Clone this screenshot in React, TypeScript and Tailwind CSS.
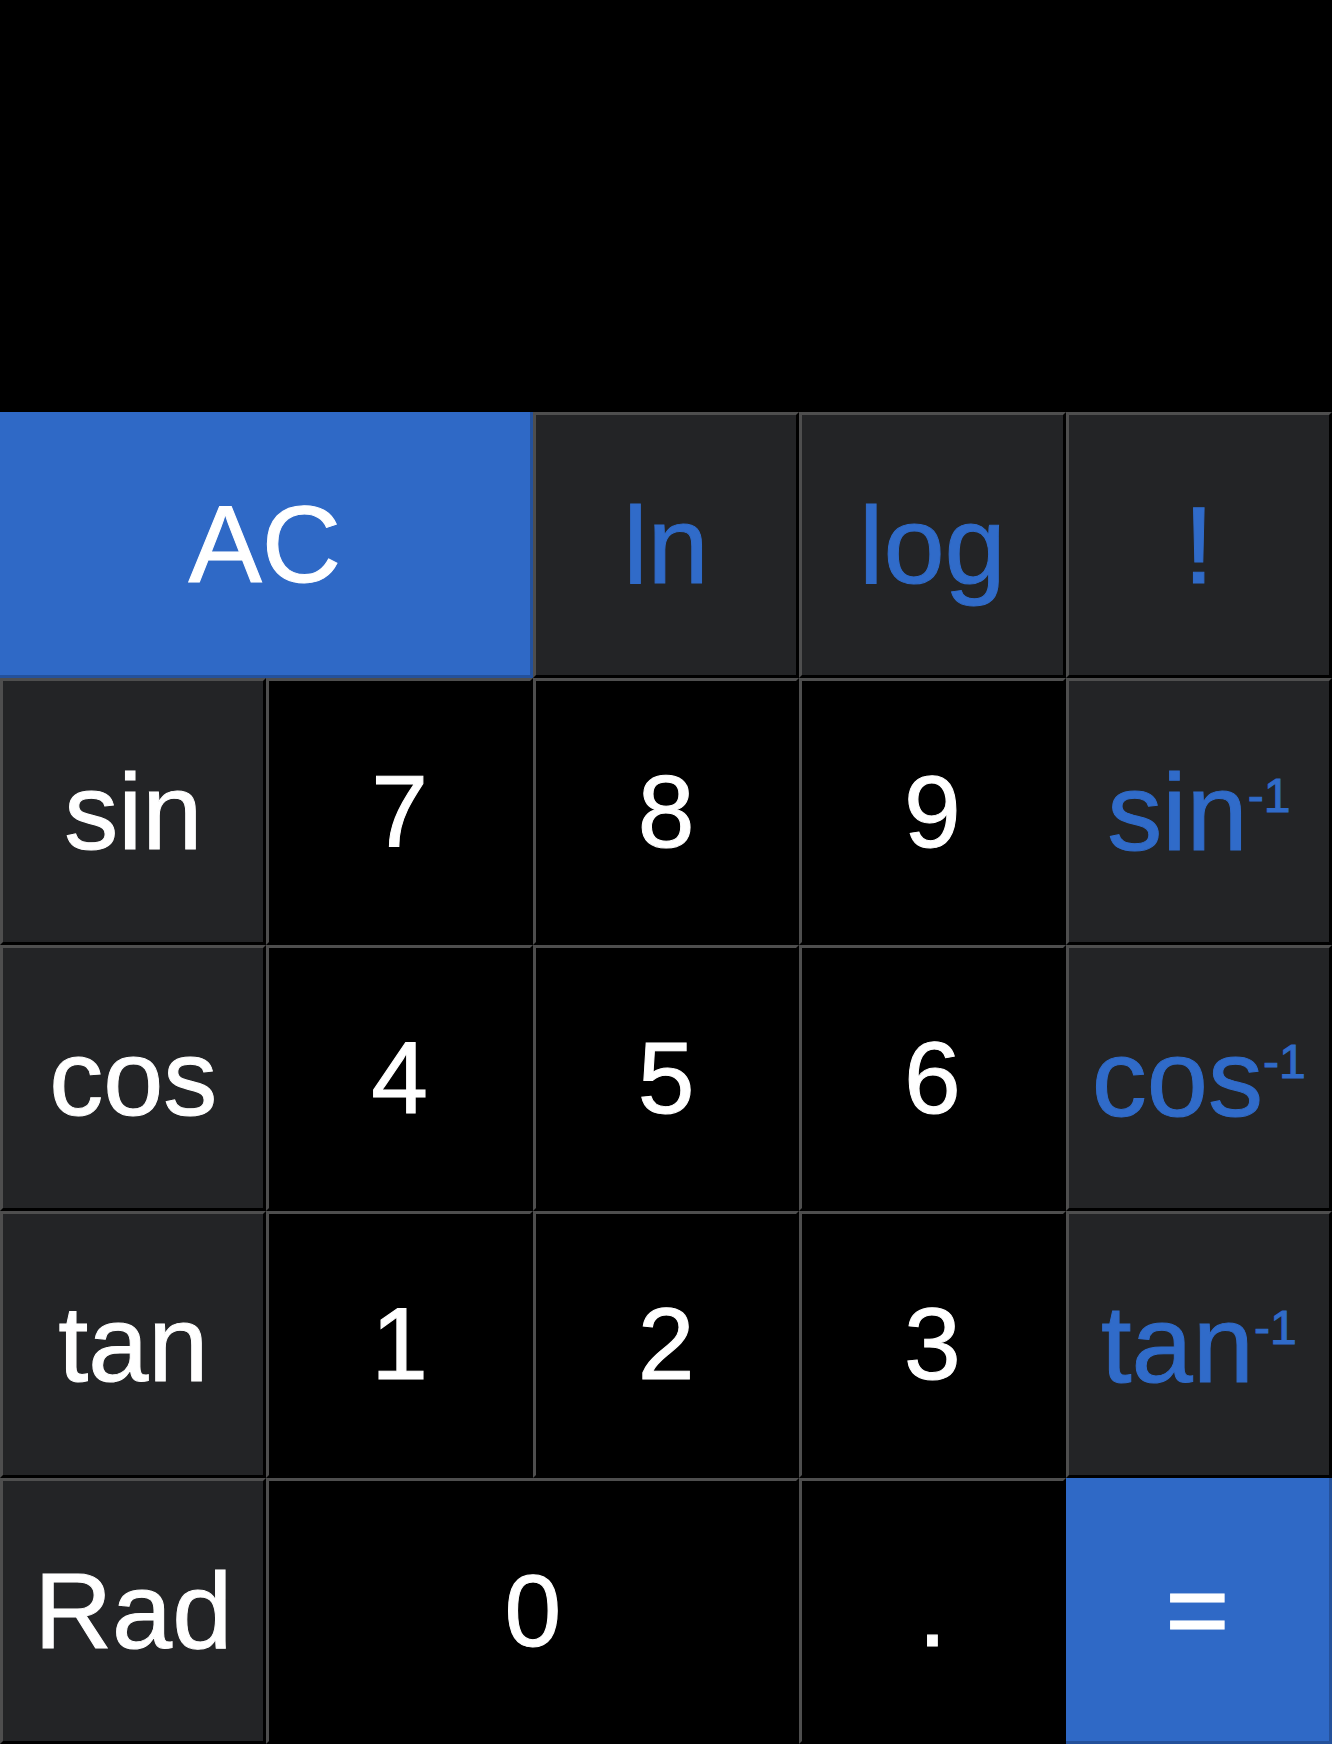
type Key = {
  label: string;
  sup?: string;
  tone: "blue" | "fn" | "num" | "side";
  span?: boolean;
};

const keys: Key[] = [
  { label: "AC", tone: "blue", span: true },
  { label: "ln", tone: "fn" },
  { label: "log", tone: "fn" },
  { label: "!", tone: "fn" },
  { label: "sin", tone: "side" },
  { label: "7", tone: "num" },
  { label: "8", tone: "num" },
  { label: "9", tone: "num" },
  { label: "sin", sup: "-1", tone: "fn" },
  { label: "cos", tone: "side" },
  { label: "4", tone: "num" },
  { label: "5", tone: "num" },
  { label: "6", tone: "num" },
  { label: "cos", sup: "-1", tone: "fn" },
  { label: "tan", tone: "side" },
  { label: "1", tone: "num" },
  { label: "2", tone: "num" },
  { label: "3", tone: "num" },
  { label: "tan", sup: "-1", tone: "fn" },
  { label: "Rad", tone: "side" },
  { label: "0", tone: "num", span: true },
  { label: ".", tone: "num" },
  { label: "=", tone: "blue" },
];

const toneClass = {
  blue: "bg-[#2f69c6] text-white text-[110px] border-r-[3px] border-b-[3px] border-r-[#24519b] border-b-[#24519b]",
  fn: "bg-[#232426] text-[#306bc9] text-[110px] border-[3px] border-t-[#4e4e4e] border-l-[#4e4e4e] border-r-black border-b-black",
  side: "bg-[#232426] text-white text-[108px] border-[3px] border-t-[#4e4e4e] border-l-[#4e4e4e] border-r-black border-b-black",
  num: "bg-black text-white text-[102px] border-[3px] border-t-[#4e4e4e] border-l-[#4e4e4e] border-r-black border-b-black",
};

function CalcKey({ k }: { k: Key }) {
  return (
    <button
      className={`flex items-center justify-center min-w-0 min-h-0 leading-none [-webkit-text-stroke:1px_currentColor] ${toneClass[k.tone]} ${k.span ? "col-span-2" : ""}`}
    >
      <span>
        {k.label}
        {k.sup && <sup className="text-[48px] top-[-38px]">{k.sup}</sup>}
      </span>
    </button>
  );
}

export default function App() {
  return (
    <div className="w-[1332px] h-[1744px] bg-black flex flex-col font-['Liberation_Sans',Arial,sans-serif] overflow-hidden">
      <div className="h-[412px] shrink-0"></div>
      <div className="grid grid-cols-5 grid-rows-5 h-[1332px]">
        {keys.map((k, i) => (
          <CalcKey key={i} k={k} />
        ))}
      </div>
    </div>
  );
}
